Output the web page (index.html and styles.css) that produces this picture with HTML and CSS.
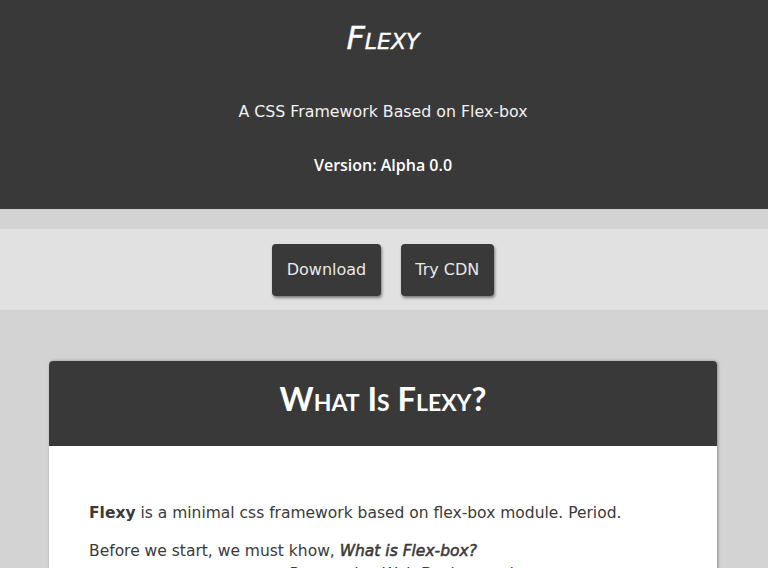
FILE: index.html
```html
<!DOCTYPE html>
<html lang="en">
<head>
<meta charset="utf-8">
<title>Flexy</title>
<link rel="stylesheet" href="styles.css">
</head>
<body>
<header class="hero">
  <h1 class="hero-title">Flexy</h1>
  <p class="hero-sub">A CSS Framework Based on Flex-box</p>
  <p class="hero-version">Version: Alpha 0.0</p>
</header>
<nav class="actions">
  <a class="btn" href="#">Download</a>
  <a class="btn" href="#">Try CDN</a>
</nav>
<main class="main">
  <section class="card">
    <h2 class="card-title">What Is Flexy?</h2>
    <div class="card-body">
      <p><strong>Flexy</strong> is a minimal css framework based on flex-box module. Period.</p>
      <p>Before we start, we must khow, <em class="question">What is Flex-box?</em><br><span class="indent">— Responsive Web Design made easy.</span></p>
    </div>
  </section>
</main>
</body>
</html>
```

FILE: styles.css
```css
html, body {
  margin: 0;
  padding: 0;
}
body {
  background: #d3d3d3;
  font-family: "DejaVu Sans", Verdana, sans-serif;
  color: #393939;
}
.hero {
  background: #393939;
  color: #ffffff;
  text-align: center;
  padding: 20px 2px 33px 0;
}
.hero-title {
  margin: 0;
  font-size: 32px;
  font-weight: normal;
  font-style: italic;
  font-variant: small-caps;
  line-height: 37px;
  -webkit-text-stroke: 0.4px #ffffff;
}
.hero-sub {
  margin: 45px 0 0;
  font-size: 15.8px;
  line-height: 19px;
  color: #f2f2f2;
}
.hero-version {
  margin: 33px 0 0;
  font-family: "Open Sans", sans-serif;
  font-weight: 600;
  font-size: 16px;
  line-height: 22px;
}
.actions {
  margin-top: 20px;
  background: #e1e1e1;
  display: flex;
  justify-content: center;
  gap: 20px;
  padding: 15px 2px 14px 0;
}
.btn {
  display: block;
  background: #393939;
  color: #e8e8e8;
  text-decoration: none;
  font-size: 16px;
  line-height: 19px;
  padding: 16px 14.5px 17px;
  border-radius: 4px;
  box-shadow: 1px 2px 3px rgba(0, 0, 0, 0.45);
}
.main {
  padding: 51px 2px 0 0;
}
.card {
  width: 668px;
  margin: 0 auto;
  background: #ffffff;
  border-radius: 4px 4px 0 0;
  box-shadow: 1px 0 3px rgba(0, 0, 0, 0.35);
}
.card-title {
  margin: 0;
  background: #393939;
  color: #ffffff;
  border-radius: 4px 4px 0 0;
  text-align: center;
  font-family: Lato, sans-serif;
  font-weight: bold;
  font-variant: small-caps;
  font-size: 32.5px;
  line-height: 40px;
  padding: 18px 0 27px;
}
.card-body {
  padding: 40px;
  font-size: 15.5px;
  line-height: 22.4px;
  color: #3a3a3a;
}
.card-body p {
  margin: 16px 0;
}
.question {
  font-style: italic;
  font-weight: normal;
  -webkit-text-stroke: 0.55px #3a3a3a;
}
.indent {
  padding-left: 180px;
}
```
